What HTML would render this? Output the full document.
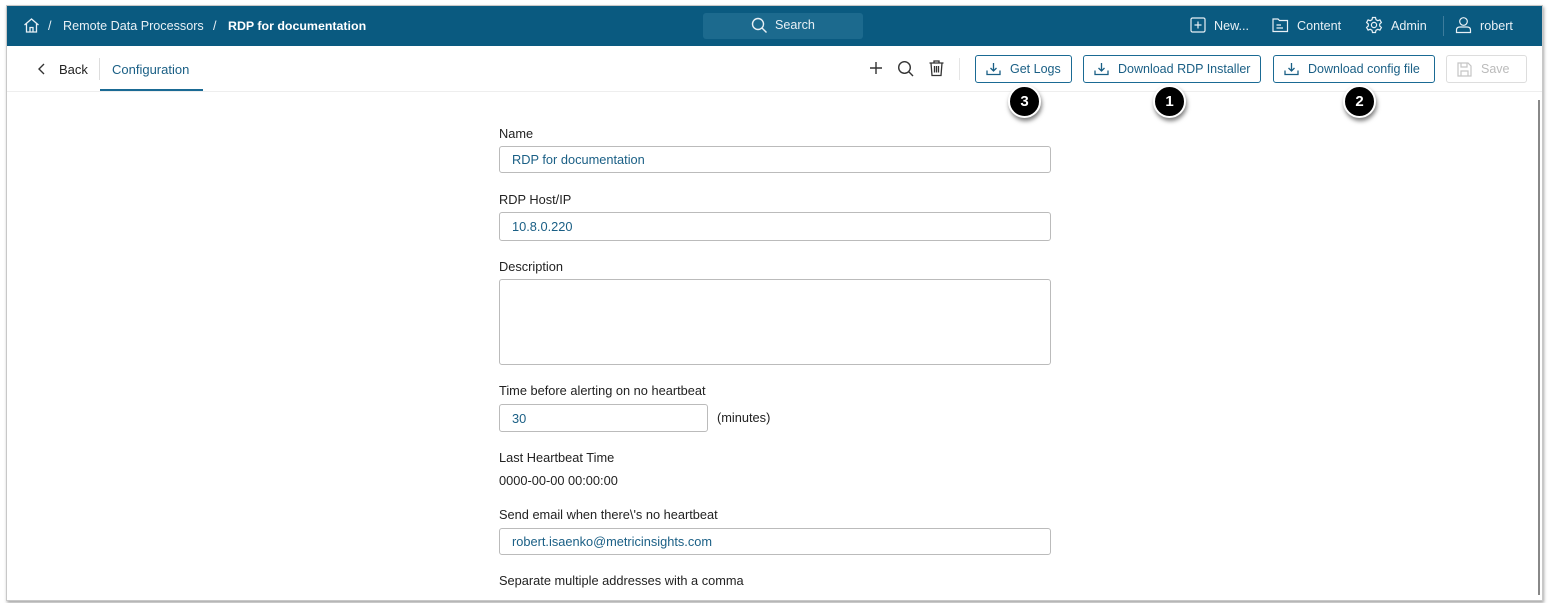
<!DOCTYPE html>
<html><head><style>
*{box-sizing:border-box;margin:0;padding:0}
body{width:1549px;height:603px;background:#fff;font-family:"Liberation Sans",sans-serif;position:relative;overflow:hidden;font-size:13px;color:#222}
.frame{position:absolute;left:6px;top:5px;width:1537px;height:596px;border:1px solid #c8c8c8;box-shadow:1px 2px 3px rgba(0,0,0,.35);background:#fff}
.hdr{position:absolute;left:7px;top:6px;width:1535px;height:40px;background:#0a5a80;color:#fff}
.abs{position:absolute;white-space:nowrap}
.w{color:#e8f0f5;font-size:12.6px}
.btn{position:absolute;top:55px;height:28px;border:1px solid #1a6a94;border-radius:3px;color:#1a5f85;font-size:12.5px;display:flex;align-items:center;padding-left:10px}
.btn svg{margin-right:9px}
.circ{position:absolute;width:33px;height:33px;border-radius:50%;background:#000;border:2px solid #fff;box-shadow:1px 3px 4px rgba(0,0,0,.5);color:#fff;font-weight:bold;font-size:15px;text-align:center;line-height:29px}
.lbl{position:absolute;left:499px;font-size:12.8px;color:#222}
.inp{position:absolute;left:499px;width:552px;border:1px solid #bbb;border-radius:3px;color:#1a5f85;padding-left:12px;font-size:12.8px;display:flex;align-items:center}
</style></head><body>
<div class="frame"></div>
<div class="hdr">
 <svg class="abs" style="left:16px;top:11px" width="17" height="17" viewBox="0 0 17 17" fill="none" stroke="#e8f0f5" stroke-width="1.3"><path d="M1.5 8 L8.5 2 L15.5 8 M3.5 6.5 V15 H13.5 V6.5 M7 15 V10.5 H10 V15"/></svg>
 <span class="abs w" style="left:41px;top:13px">/</span>
 <span class="abs w" style="left:56px;top:13px">Remote Data Processors</span>
 <span class="abs w" style="left:206px;top:13px">/</span>
 <span class="abs" style="left:221px;top:13px;font-weight:bold;color:#fff;font-size:12.4px">RDP for documentation</span>
 <div class="abs" style="left:696px;top:7px;width:160px;height:26px;background:#1c6a8e;border-radius:3px"></div>
 <svg class="abs" style="left:744px;top:11px" width="17" height="17" viewBox="0 0 17 17" fill="none" stroke="#e8f0f5" stroke-width="1.4"><circle cx="7" cy="7" r="5.5"/><path d="M11 11 L15.5 15.5"/></svg>
 <span class="abs w" style="left:768px;top:12px">Search</span>
 <svg class="abs" style="left:1183px;top:11px" width="16" height="16" viewBox="0 0 16 16" fill="none" stroke="#e8f0f5" stroke-width="1.2"><rect x="1" y="1" width="14" height="14" rx="1.5"/><path d="M8 4.5V11.5M4.5 8H11.5"/></svg>
 <span class="abs w" style="left:1207px;top:13px">New...</span>
 <svg class="abs" style="left:1265px;top:11px" width="17" height="16" viewBox="0 0 17 16" fill="none" stroke="#e8f0f5" stroke-width="1.2"><path d="M1 2 H6 L7.5 3.5 H15.5 V14.5 H1 Z M4.5 8 H9 M4.5 11 H11"/></svg>
 <span class="abs w" style="left:1290px;top:13px">Content</span>
 <svg class="abs" style="left:1358px;top:10px" width="18" height="18" viewBox="0 0 18 18" fill="none" stroke="#e8f0f5" stroke-width="1.2"><circle cx="9" cy="9" r="2.6"/><path d="M7.5 1.5h3l.5 2.2 1.8 1 2.1-.8 1.5 2.6-1.7 1.5v2l1.7 1.5-1.5 2.6-2.1-.8-1.8 1-.5 2.2h-3l-.5-2.2-1.8-1-2.1.8-1.5-2.6 1.7-1.5v-2L1.6 6.5 3.1 3.9l2.1.8 1.8-1z"/></svg>
 <span class="abs w" style="left:1384px;top:13px">Admin</span>
 <div class="abs" style="left:1436px;top:10px;width:1px;height:20px;background:#3d7c9c"></div>
 <svg class="abs" style="left:1448px;top:10px" width="17" height="18" viewBox="0 0 17 18" fill="none" stroke="#e8f0f5" stroke-width="1.2"><circle cx="8.5" cy="5.5" r="3.8"/><path d="M1.5 16.5 V14 Q1.5 11 5 11 H12 Q15.5 11 15.5 14 V16.5 Z"/></svg>
 <span class="abs w" style="left:1473px;top:13px">robert</span>
</div>
<svg class="abs" style="left:37px;top:63px" width="10" height="12" viewBox="0 0 10 12" fill="none" stroke="#333" stroke-width="1.4"><path d="M7 1 L2 6 L7 11"/></svg>
<span class="abs" style="left:59px;top:62px;color:#222">Back</span>
<div class="abs" style="left:99px;top:58px;width:1px;height:22px;background:#ddd"></div>
<span class="abs" style="left:112px;top:62px;color:#1a5f85">Configuration</span>
<div class="abs" style="left:100px;top:89px;width:103px;height:2px;background:#1a6a94"></div>
<div class="abs" style="left:7px;top:91px;width:1535px;height:1px;background:#eee"></div>
<svg class="abs" style="left:868px;top:60px" width="16" height="16" viewBox="0 0 16 16" stroke="#333" stroke-width="1.4"><path d="M8 2V14M2 8H14"/></svg>
<svg class="abs" style="left:897px;top:60px" width="18" height="18" viewBox="0 0 18 18" fill="none" stroke="#333" stroke-width="1.4"><circle cx="7.5" cy="7.5" r="5.8"/><path d="M11.8 11.8L16 16"/></svg>
<svg class="abs" style="left:928px;top:59px" width="17" height="18" viewBox="0 0 17 18" fill="none" stroke="#333" stroke-width="1.3"><path d="M1.5 4H15.5M6 4V2H11V4M3 4L4 16.5H13L14 4M6.5 7V13.5M8.5 7V13.5M10.5 7V13.5"/></svg>
<div class="abs" style="left:959px;top:58px;width:1px;height:22px;background:#e5e5e5"></div>
<div class="btn" style="left:975px;width:97px"><svg width="15" height="14" viewBox="0 0 15 14" fill="none" stroke="#1a5f85" stroke-width="1.3"><path d="M7.5 1V9M4.5 6L7.5 9L10.5 6M1 8.5V12.5H14V8.5"/></svg>Get Logs</div>
<div class="btn" style="left:1083px;width:178px"><svg width="15" height="14" viewBox="0 0 15 14" fill="none" stroke="#1a5f85" stroke-width="1.3"><path d="M7.5 1V9M4.5 6L7.5 9L10.5 6M1 8.5V12.5H14V8.5"/></svg>Download RDP Installer</div>
<div class="btn" style="left:1273px;width:162px"><svg width="15" height="14" viewBox="0 0 15 14" fill="none" stroke="#1a5f85" stroke-width="1.3"><path d="M7.5 1V9M4.5 6L7.5 9L10.5 6M1 8.5V12.5H14V8.5"/></svg>Download config file</div>
<div class="btn" style="left:1446px;width:81px;border-color:#ddd;color:#bbb"><svg width="15" height="15" viewBox="0 0 15 15" fill="none" stroke="#c5c5c5" stroke-width="1.2"><path d="M1 1H11L14 4V14H1Z M4 1V5H10V1 M4 14V9H11V14"/></svg>Save</div>
<div class="circ" style="left:1008px;top:85px">3</div>
<div class="circ" style="left:1153px;top:85px">1</div>
<div class="circ" style="left:1343px;top:85px">2</div>
<div class="abs" style="left:1538px;top:100px;width:2px;height:495px;background:#888"></div>
<div class="lbl" style="top:126px">Name</div>
<div class="inp" style="top:146px;height:27px">RDP for documentation</div>
<div class="lbl" style="top:192px">RDP Host/IP</div>
<div class="inp" style="top:212px;height:29px">10.8.0.220</div>
<div class="lbl" style="top:259px">Description</div>
<div class="inp" style="top:279px;height:86px"></div>
<div class="lbl" style="top:383px">Time before alerting on no heartbeat</div>
<div class="inp" style="top:404px;height:28px;width:209px">30</div>
<div class="abs" style="left:717px;top:410px;font-size:12.8px">(minutes)</div>
<div class="lbl" style="top:450px">Last Heartbeat Time</div>
<div class="lbl" style="top:473px">0000-00-00 00:00:00</div>
<div class="lbl" style="top:507px">Send email when there\'s no heartbeat</div>
<div class="inp" style="top:528px;height:27px">robert.isaenko@metricinsights.com</div>
<div class="lbl" style="top:573px">Separate multiple addresses with a comma</div>
</body></html>
